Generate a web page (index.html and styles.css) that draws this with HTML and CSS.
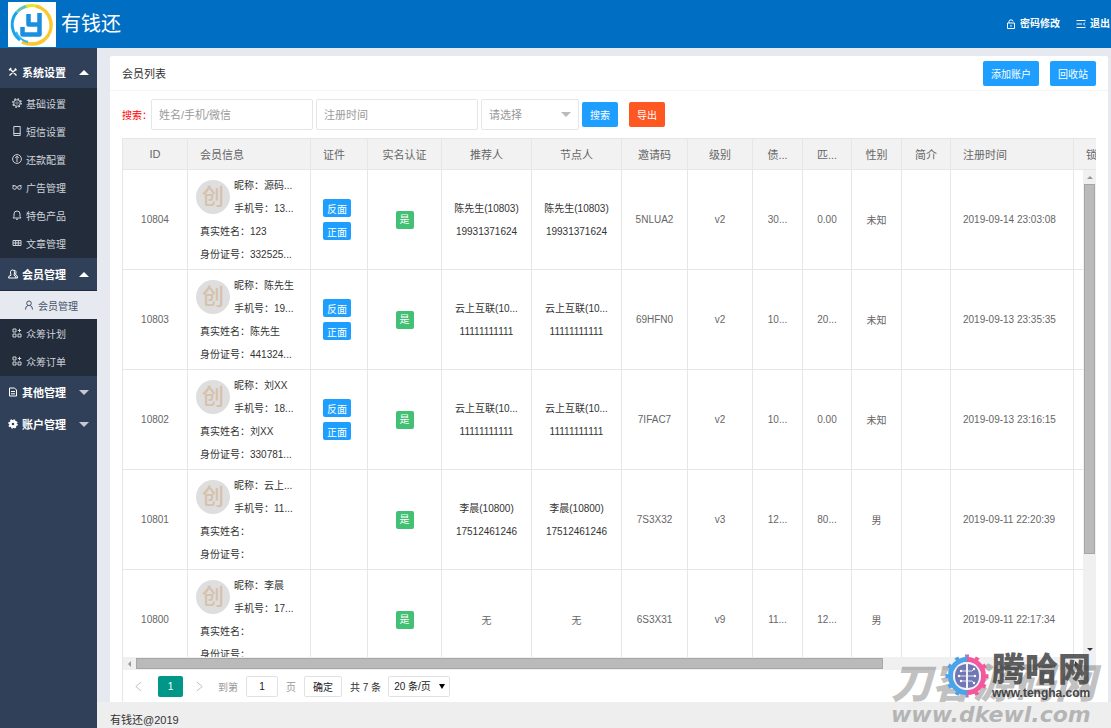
FILE: index.html
```html
<!DOCTYPE html>
<html lang="zh-CN">
<head>
<meta charset="utf-8">
<title>有钱还</title>
<link rel="stylesheet" href="styles.css">
</head>
<body>
<header class="topbar">
  <svg class="logo" viewBox="0 0 48 45" aria-hidden="true">
    <rect width="48" height="45" fill="#fff"/>
    <g fill="none">
      <path d="M12 38A19 19 0 0 1 9 10" stroke="#18a4ea" stroke-width="3"/>
      <path d="M9 10A19 19 0 0 1 20 4" stroke="#63c6b4" stroke-width="3"/>
      <path d="M18 4.500A19 19 0 0 1 31 5" stroke="#e8e52d" stroke-width="3"/>
      <path d="M28 4A19.500 19.500 0 0 1 36 38Q27 45 14 40" stroke="#fbc72e" stroke-width="3.500"/>
      <path d="M8 30A17 17 0 0 0 20 40" stroke="#39b5ee" stroke-width="2"/>
      <path d="M20.500 12V22.500H31M31.500 11V32.500H14.500V25" stroke="#1a8fe0" stroke-width="4.500" stroke-linejoin="round"/>
    </g>
  </svg>
  <h1 class="brand">有钱还</h1>
  <nav class="top-links">
    <a href="#"><svg class="icon" viewBox="0 0 10 10"><path d="M1.500 4h7v5.500h-7zM3 4V2.500Q3 .8 5 .8T7 2.500M5 5.800v2"/></svg>密码修改</a>
    <a href="#"><svg class="icon" viewBox="0 0 10 10"><path d="M.5 1.500h9M.5 5h5.500M.5 8.500h9M9 3.500L7.500 5 9 6.500"/></svg>退出</a>
  </nav>
</header>
<div class="layout">
  <aside class="sidebar">
    <a class="group" href="#"><svg class="icon" viewBox="0 0 10 10"><path stroke-width="1.300" d="M2 2l6.500 6.500M8 2L1.500 8.500M1 3.200L3.200 1M6.800 1.500L8.500 3.200"/></svg>系统设置<span class="arrow up"></span></a>
    <div class="sub">
      <a href="#"><svg class="icon" viewBox="0 0 10 10"><circle cx="5" cy="5" r="4.200" stroke-width="1.400" stroke-dasharray="1.650 1.650"/><circle cx="5" cy="5" r="3.300"/><circle cx="5" cy="5" r="1.200" stroke-width=".6"/></svg>基础设置</a>
      <a href="#"><svg class="icon" viewBox="0 0 10 10"><path d="M1.800 .5h6.400v9H1.800zM1.800 7.500h6.400"/></svg>短信设置</a>
      <a href="#"><svg class="icon" viewBox="0 0 10 10"><circle cx="5" cy="5" r="4.400"/><path d="M5 2.200V8M3.200 4L5 2.200 6.800 4"/></svg>还款配置</a>
      <a href="#"><svg class="icon" viewBox="0 0 10 10"><circle cx="2.600" cy="5.500" r="1.800"/><circle cx="7.400" cy="5.500" r="1.800"/><path d="M.5 3.500l2 .2M9.500 3.500l-2 .2M4.400 5h1.200"/></svg>广告管理</a>
      <a href="#"><svg class="icon" viewBox="0 0 10 10"><path d="M1 8h8L8 6.500V4Q8 1 5 1T2 4v2.500zM4 9.300h2"/></svg>特色产品</a>
      <a href="#"><svg class="icon" viewBox="0 0 10 10"><path d="M1 2.500h8v5H1zM1 5h8M3.700 2.500v5M6.300 2.500v5"/></svg>文章管理</a>
    </div>
    <a class="group" href="#"><svg class="icon" viewBox="0 0 10 10"><path d="M.5 9Q.5 6.500 3 6.300Q1.500 1 4.500 1T6 6.300Q8 6.500 8 9zM6 1.200Q9 1.500 7.500 5.500Q9.600 6 9.600 9H8"/></svg>会员管理<span class="arrow up"></span></a>
    <div class="sub">
      <a class="current" href="#"><svg class="icon" viewBox="0 0 10 10"><circle cx="5" cy="3.300" r="2.300"/><path d="M1.500 9.500Q1.500 6 4 5.500M6 5.500Q8.500 6 8.500 9.500"/></svg>会员管理</a>
      <a href="#"><svg class="icon" viewBox="0 0 10 10"><path d="M1 1h3v3H1zM1 6h3v3H1zM6 6h3v3H6zM7.500 .8v3.400M5.800 2.500h3.400"/></svg>众筹计划</a>
      <a href="#"><svg class="icon" viewBox="0 0 10 10"><path d="M1 1h3v3H1zM1 6h3v3H1zM6 6h3v3H6zM7.500 .8v3.400M5.800 2.500h3.400"/></svg>众筹订单</a>
    </div>
    <a class="group" href="#"><svg class="icon" viewBox="0 0 10 10"><path d="M1.500 1h5l2 2v6h-7zM3 4.500h4M3 6.800h4"/></svg>其他管理<span class="arrow down"></span></a>
    <a class="group" href="#"><svg class="icon" viewBox="0 0 10 10"><circle cx="5" cy="5" r="2.600" stroke-width="2.600"/><circle cx="5" cy="5" r="4" stroke-width="1.600" stroke-dasharray="1.570 1.570"/></svg>账户管理<span class="arrow down"></span></a>
  </aside>
  <div class="content">
    <main class="panel">
      <div class="panel-head">
        <h2>会员列表</h2>
        <button class="btn" type="button">添加账户</button>
        <button class="btn" type="button">回收站</button>
      </div>
      <form class="search">
        <label for="keyword">搜索：</label>
        <input class="field" id="keyword" type="text" placeholder="姓名/手机/微信">
        <input class="field" type="text" placeholder="注册时间" aria-label="注册时间">
        <span class="select-wrap"><select class="field" aria-label="请选择"><option>请选择</option></select></span>
        <button class="btn" type="button">搜索</button>
        <button class="btn danger" type="button">导出</button>
      </form>
      <div class="grid">
        <div class="viewport">
          <table>
            <colgroup><col class="w65"><col class="w123"><col class="w57"><col class="w74"><col class="w90"><col class="w90"><col class="w66"><col class="w65"><col class="w50"><col class="w49"><col class="w50"><col class="w49"><col class="w123"><col class="w90"></colgroup>
            <thead>
              <tr><th>ID</th><th class="left">会员信息</th><th class="left">证件</th><th>实名认证</th><th>推荐人</th><th>节点人</th><th>邀请码</th><th>级别</th><th>债...</th><th>匹...</th><th>性别</th><th>简介</th><th class="left">注册时间</th><th class="left">锁定状态</th></tr>
            </thead>
            <tbody>
              <tr>
                <td>10804</td>
                <td class="member"><div class="who"><span class="avatar">创</span><div>昵称：源码...<br>手机号：13...</div></div><div class="more">真实姓名：123<br>身份证号：332525...</div></td>
                <td><div class="cards"><button class="tag" type="button">反面</button><button class="tag" type="button">正面</button></div></td>
                <td><span class="yes">是</span></td>
                <td class="ref">陈先生(10803)<br>19931371624</td><td class="ref">陈先生(10803)<br>19931371624</td>
                <td>5NLUA2</td><td>v2</td><td>30...</td><td>0.00</td><td>未知</td><td></td><td class="left">2019-09-14 23:03:08</td><td></td>
              </tr>
              <tr>
                <td>10803</td>
                <td class="member"><div class="who"><span class="avatar">创</span><div>昵称：陈先生<br>手机号：19...</div></div><div class="more">真实姓名：陈先生<br>身份证号：441324...</div></td>
                <td><div class="cards"><button class="tag" type="button">反面</button><button class="tag" type="button">正面</button></div></td>
                <td><span class="yes">是</span></td>
                <td class="ref">云上互联(10...<br>11111111111</td><td class="ref">云上互联(10...<br>11111111111</td>
                <td>69HFN0</td><td>v2</td><td>10...</td><td>20...</td><td>未知</td><td></td><td class="left">2019-09-13 23:35:35</td><td></td>
              </tr>
              <tr>
                <td>10802</td>
                <td class="member"><div class="who"><span class="avatar">创</span><div>昵称：刘XX<br>手机号：18...</div></div><div class="more">真实姓名：刘XX<br>身份证号：330781...</div></td>
                <td><div class="cards"><button class="tag" type="button">反面</button><button class="tag" type="button">正面</button></div></td>
                <td><span class="yes">是</span></td>
                <td class="ref">云上互联(10...<br>11111111111</td><td class="ref">云上互联(10...<br>11111111111</td>
                <td>7IFAC7</td><td>v2</td><td>10...</td><td>0.00</td><td>未知</td><td></td><td class="left">2019-09-13 23:16:15</td><td></td>
              </tr>
              <tr>
                <td>10801</td>
                <td class="member"><div class="who"><span class="avatar">创</span><div>昵称：云上...<br>手机号：11...</div></div><div class="more">真实姓名：<br>身份证号：</div></td>
                <td></td>
                <td><span class="yes">是</span></td>
                <td class="ref">李晨(10800)<br>17512461246</td><td class="ref">李晨(10800)<br>17512461246</td>
                <td>7S3X32</td><td>v3</td><td>12...</td><td>80...</td><td>男</td><td></td><td class="left">2019-09-11 22:20:39</td><td></td>
              </tr>
              <tr>
                <td>10800</td>
                <td class="member"><div class="who"><span class="avatar">创</span><div>昵称：李晨<br>手机号：17...</div></div><div class="more">真实姓名：<br>身份证号：</div></td>
                <td></td>
                <td><span class="yes">是</span></td>
                <td>无</td><td>无</td>
                <td>6S3X31</td><td>v9</td><td>11...</td><td>12...</td><td>男</td><td></td><td class="left">2019-09-11 22:17:34</td><td></td>
              </tr>
            </tbody>
          </table>
          <div class="vbar"><i class="tip t-up"></i><span class="thumb"></span><i class="tip t-down"></i></div>
        </div>
        <div class="hbar"><i class="tip t-left"></i><span class="track"><span class="thumb"></span></span><i class="tip t-right"></i></div>
        <div class="pager">
          <button class="step" type="button" aria-label="上一页"><svg viewBox="0 0 10 12"><path d="M8 1L2 6l6 5"/></svg></button>
          <button class="page" type="button">1</button>
          <button class="step" type="button" aria-label="下一页"><svg viewBox="0 0 10 12"><path d="M2 1l6 5-6 5"/></svg></button>
          <label class="muted" for="goto">到第</label>
          <input id="goto" type="text" value="1">
          <span class="muted">页</span>
          <button class="ok" type="button">确定</button>
          <span>共 7 条</span>
          <span class="size-wrap"><select aria-label="每页条数"><option>20 条/页</option></select></span>
        </div>
      </div>
    </main>
    <footer class="footer">有钱还@2019</footer>
  </div>
</div>
<div class="mark mark-back"><span class="mark-name">刀客源码网</span><span class="mark-url">www.dkewl.com</span></div>
<div class="mark mark-front">
  <svg class="gear" viewBox="0 0 44 44" aria-hidden="true">
    <g fill="none">
      <path d="M22 5.500A16.500 16.500 0 0 0 22 38.500" stroke="#4ba3ea" stroke-width="5"/>
      <path d="M22 2.500A19.500 19.500 0 0 0 22 41.500" stroke="#4ba3ea" stroke-width="4" stroke-dasharray="4 6.210" stroke-dashoffset="2"/>
      <path d="M22 5.500A16.500 16.500 0 0 1 22 38.500" stroke="#f4589c" stroke-width="5"/>
      <path d="M22 2.500A19.500 19.500 0 0 1 22 41.500" stroke="#f4589c" stroke-width="4" stroke-dasharray="4 6.210" stroke-dashoffset="2"/>
    </g>
    <circle cx="22" cy="22" r="14" fill="#f3f3f8"/>
    <path d="M21 10Q10 11 10 22t11 12z" fill="#7077b5"/>
    <path d="M23 10Q34 11 34 22T23 34z" fill="#7077b5"/>
    <path d="M21 17h-5M21 22h-7M21 27h-5M23 17h4l2-2M23 22h7M23 27h4l2 2" fill="none" stroke="#fff" stroke-width=".8"/>
    <g fill="#fff"><circle cx="16" cy="17" r="1.200"/><circle cx="14" cy="22" r="1.200"/><circle cx="16" cy="27" r="1.200"/><circle cx="29" cy="15" r="1.200"/><circle cx="30" cy="22" r="1.200"/><circle cx="29" cy="29" r="1.200"/></g>
  </svg>
  <div class="mark-text"><span class="mark-title">腾哈网</span><span class="mark-site">www.tengha.com</span></div>
</div>
</body>
</html>
```
FILE: styles.css
```css
* { box-sizing: border-box; }
body, button, input, select {
  font-family: "Liberation Sans", "Noto Sans CJK SC", sans-serif;
  font-size: 10px;
}
body {
  margin: 0;
  height: 100vh;
  display: flex;
  flex-direction: column;
  overflow: hidden;
  position: relative;
  color: #333;
  background: #e6e9ef;
}
a { color: inherit; text-decoration: none; }
h1, h2 { margin: 0; font-weight: 400; }
button { padding: 0; border: 0; cursor: pointer; }
.icon { width: 10px; height: 10px; flex: none; fill: none; stroke: currentColor; stroke-width: 1; }

.topbar {
  flex: none;
  height: 48px;
  display: flex;
  align-items: center;
  padding-left: 8px;
  background: #006fc3;
  color: #fff;
}
.logo { width: 48px; height: 45px; }
.brand { margin-left: 5px; font-size: 20px; line-height: 45px; }
.top-links { display: flex; gap: 16px; margin-left: auto; padding-right: 1px; font-weight: 700; }
.top-links a { display: flex; align-items: center; gap: 4px; line-height: 46px; }

.layout { flex: 1; min-height: 0; display: flex; }
.sidebar { flex: none; width: 97px; padding-top: 8px; background: #2f4058; color: #fff; }
.group {
  display: flex;
  align-items: center;
  gap: 4px;
  height: 32px;
  padding: 0 8px;
  font-size: 11px;
  font-weight: 700;
}
.arrow { margin-left: auto; border: 5px solid transparent; }
.up { border-top: 0; border-bottom-color: #fff; }
.down { border-bottom: 0; border-top-color: #c5cad1; }
.sub { padding: 1px 0; background: #222c3b; color: #d0d4da; }
.sub a { display: flex; align-items: center; gap: 4px; height: 28px; padding-left: 12px; }
.sub .current { padding-left: 24px; background: #e6e9ef; color: #45536a; }

.content { flex: 1; min-width: 0; display: flex; flex-direction: column; }
.panel {
  flex: 1;
  min-height: 0;
  display: flex;
  flex-direction: column;
  margin: 8px 3px 0 13px;
  background: #fff;
  border-radius: 2px 2px 0 0;
}
.panel-head {
  display: flex;
  align-items: center;
  gap: 11px;
  height: 35px;
  padding: 0 12px;
  border-bottom: 1px solid #f4f4f4;
}
.panel-head h2 { margin-right: auto; font-size: 11px; }
.btn {
  height: 25px;
  padding: 0 8px;
  border-radius: 2px;
  background: #1e9fff;
  color: #fff;
}
.danger { margin-left: 8px; background: #ff5722; }
.search { display: flex; align-items: center; gap: 3px; padding: 8px 12px; }
.search label { width: 26px; white-space: nowrap; color: #f00; }
.field {
  width: 162px;
  height: 31px;
  padding: 0 7px;
  border: 1px solid #e6e6e6;
  border-radius: 2px;
  background: #fff;
  color: #999;
  font-size: 11px;
}
.field::placeholder { color: #9a9a9a; }
.select-wrap, .size-wrap { position: relative; }
.select-wrap .field { width: 98px; appearance: none; }
.select-wrap::after {
  content: "";
  position: absolute;
  right: 8px;
  top: 13px;
  border: 5px solid transparent;
  border-bottom: 0;
  border-top-color: #bbb;
}

.grid { flex: 1; min-height: 0; display: flex; flex-direction: column; margin: 0 12px; border-left: 1px solid #e6e6e6; }
.viewport { flex: 1; min-height: 0; position: relative; overflow: hidden; }
table { width: max-content; table-layout: fixed; border-collapse: separate; border-spacing: 0; }
.w49 { width: 49px; }
.w50 { width: 50px; }
.w57 { width: 57px; }
.w65 { width: 65px; }
.w66 { width: 66px; }
.w74 { width: 74px; }
.w90 { width: 90px; }
.w123 { width: 123px; }
th, td {
  padding: 0;
  border-right: 1px solid #e6e6e6;
  border-bottom: 1px solid #e6e6e6;
  text-align: center;
  white-space: nowrap;
  overflow: hidden;
}
th { height: 32px; border-top: 1px solid #e6e6e6; background: #f2f2f2; color: #666; font-size: 11px; font-weight: 400; }
td { height: 100px; color: #666; }
.left { padding-left: 12px; text-align: left; }
.member { padding-left: 8px; text-align: left; }
.member, .ref { color: #333; line-height: 23px; }
.who { display: flex; align-items: center; gap: 4px; }
.avatar {
  width: 34px;
  height: 34px;
  border-radius: 50%;
  background: #dedede;
  color: #d6c1aa;
  font-size: 22px;
  font-weight: 500;
  line-height: 34px;
  text-align: center;
}
.more { padding-left: 4px; }
.cards { display: flex; flex-direction: column; align-items: flex-start; gap: 5px; padding-left: 12px; }
.tag { width: 28px; height: 18px; border-radius: 2px; background: #1e9fff; color: #fff; }
.yes { display: inline-block; width: 18px; border-radius: 2px; background: #42c074; color: #fff; line-height: 18px; }

.vbar {
  position: absolute;
  top: 32px;
  right: 0;
  bottom: 0;
  width: 13px;
  display: flex;
  flex-direction: column;
  align-items: center;
  background: #f0f0f0;
}
.thumb { background: #bababa; border: 1px solid #a6a6a6; }
.vbar .thumb { width: 11px; height: 76%; margin-top: 5px; }
.tip { width: 0; height: 0; border: 3px solid transparent; }
.t-up { margin-top: 6px; border-top: 0; border-bottom-color: #999; }
.t-down { margin: auto 0 6px; border-bottom: 0; border-top-color: #333; }
.hbar { flex: none; height: 13px; display: flex; align-items: center; gap: 5px; padding: 0 18px 0 5px; background: #f0f0f0; }
.t-left { border-left: 0; border-right-color: #999; }
.t-right { border-right: 0; border-left-color: #333; }
.track { flex: 1; display: flex; }
.hbar .thumb { width: 80%; height: 11px; }

.pager { flex: none; display: flex; align-items: center; gap: 8px; height: 32px; padding-left: 11px; }
.pager button, .pager input, .pager select { height: 21px; border-radius: 2px; }
.pager .step { width: 12px; margin-right: 4px; background: none; }
.page + .step { margin-left: 4px; }
.pager .page + .step { margin-right: 3px; }
.step svg { display: block; width: 9px; height: 11px; fill: none; stroke: #bbb; }
.pager .page { width: 25px; background: #009688; color: #fff; }
.muted { color: #999; }
.pager input, .pager select, .pager .ok { border: 1px solid #e2e2e2; background: #fff; color: #222; }
.pager input { width: 32px; padding: 0; text-align: center; }
.pager .ok { width: 38px; }
.pager .size-wrap { margin-left: -1px; }
.size-wrap select { width: 62px; padding: 0 5px; appearance: none; }
.size-wrap::after {
  content: "";
  position: absolute;
  right: 5px;
  top: 8px;
  border: 3px solid transparent;
  border-top: 5px solid #000;
  border-bottom: 0;
}
.footer { flex: none; height: 26px; padding: 10px 0 0 13px; background: #eee; font-size: 11px; line-height: 16px; }

.mark { position: absolute; pointer-events: none; white-space: nowrap; }
.mark span { display: block; }
.mark-back { right: 15px; bottom: 1px; color: #000; opacity: 0.24; font-style: italic; font-weight: 900; }
.mark-name { font-size: 41px; line-height: 38px; }
.mark-url { font-family: "DejaVu Sans", sans-serif; font-size: 22px; line-height: 24px; }
.mark-front { right: 20px; bottom: 29px; display: flex; align-items: center; gap: 3px; }
.gear { width: 44px; height: 44px; }
.mark-text { color: #444; font-weight: 900; }
.mark-title { font-size: 33px; line-height: 34px; opacity: 0.85; }
.mark-site { font-size: 12px; line-height: 12px; }
```
